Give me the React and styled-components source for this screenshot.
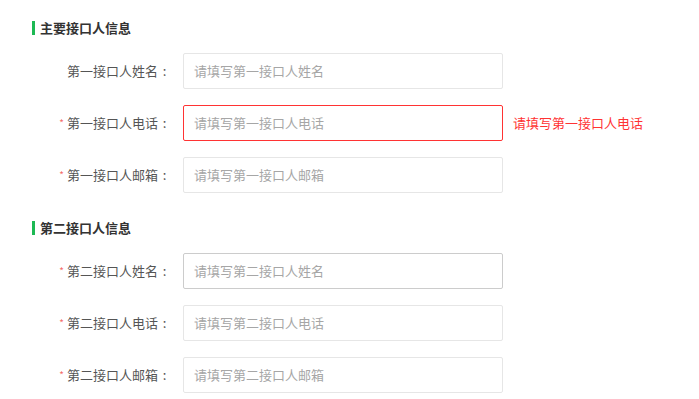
import React from "react";
import styled, { createGlobalStyle } from "styled-components";

const Global = createGlobalStyle`
  html, body { margin: 0; padding: 0; background: #fff; }
  body { font-family: "Noto Sans CJK SC", "Noto Sans", sans-serif; }
  * { box-sizing: border-box; }
`;

const Page = styled.div`
  display: flex;
  flex-direction: column;
  gap: 25px;
  padding: 18px 0 0 32px;
  width: 699px;
`;

const Section = styled.section`
  display: flex;
  flex-direction: column;
  gap: 16px;
`;

const Title = styled.h3`
  display: flex;
  align-items: center;
  gap: 5px;
  margin: 0 0 -1px;
  height: 20px;
  font-size: 13px;
  font-weight: bold;
  color: #333;
  line-height: 20px;
  &::before {
    content: "";
    display: block;
    width: 3px;
    height: 14px;
    background: #1db954;
  }
`;

const Row = styled.div`
  display: flex;
  align-items: center;
  height: 36px;
`;

const Label = styled.label`
  width: 139px;
  text-align: right;
  font-size: 13px;
  color: #555;
  margin-right: 12px;
  padding-bottom: 2px;
  white-space: nowrap;
`;

const Colon = styled.span`
  display: inline-block;
  width: 13px;
  text-align: center;
`;

const Star = styled.span`
  color: #f56c6c;
  font-size: 10px;
  margin-right: 3px;
  vertical-align: 1px;
`;

const Input = styled.input`
  width: 320px;
  height: 36px;
  border: 1px solid ${(p) => (p.$error ? "#f33" : p.$hover ? "#ccc" : "#e6e6e6")};
  border-radius: 2px;
  padding: 0 10px 2px;
  font-family: inherit;
  font-size: 13px;
  color: #333;
  outline: none;
  &::placeholder { color: #a6a6a6; }
`;

const Error = styled.span`
  margin-left: 10px;
  padding-bottom: 2px;
  font-size: 13px;
  color: #f33;
`;

const sections = [
  {
    title: "主要接口人信息",
    rows: [
      { label: "第一接口人姓名", ph: "请填写第一接口人姓名", req: false },
      { label: "第一接口人电话", ph: "请填写第一接口人电话", req: true, error: "请填写第一接口人电话" },
      { label: "第一接口人邮箱", ph: "请填写第一接口人邮箱", req: true },
    ],
  },
  {
    title: "第二接口人信息",
    rows: [
      { label: "第二接口人姓名", ph: "请填写第二接口人姓名", req: true, hover: true },
      { label: "第二接口人电话", ph: "请填写第二接口人电话", req: true },
      { label: "第二接口人邮箱", ph: "请填写第二接口人邮箱", req: true },
    ],
  },
];

export default function App() {
  return (
    <>
      <Global />
      <Page>
        {sections.map((s) => (
          <Section key={s.title}>
            <Title>{s.title}</Title>
            {s.rows.map((r) => (
              <Row key={r.label}>
                <Label>
                  {r.req && <Star>*</Star>}
                  {r.label}
                  <Colon>:</Colon>
                </Label>
                <Input placeholder={r.ph} $error={!!r.error} $hover={r.hover} />
                {r.error && <Error>{r.error}</Error>}
              </Row>
            ))}
          </Section>
        ))}
      </Page>
    </>
  );
}
